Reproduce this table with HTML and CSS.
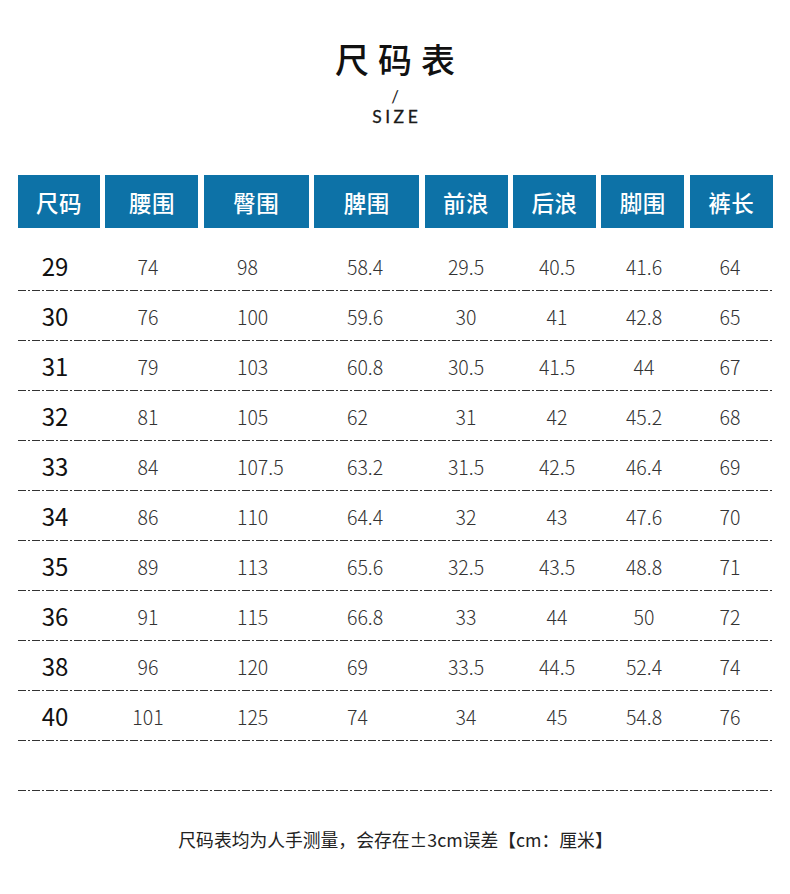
FILE: index.html
```html
<!DOCTYPE html>
<html lang="zh-CN">
<head>
<meta charset="utf-8">
<title>尺码表</title>
<link rel="stylesheet" href="styles.css">
</head>
<body>
<div class="page">
  <header class="heading">
    <h1 class="title">尺码表</h1>
    <div class="slash">/</div>
    <div class="size-label">SIZE</div>
  </header>

  <section class="table">
    <div class="head-row">
      <div class="hcell">尺码</div>
      <div class="hcell">腰围</div>
      <div class="hcell">臀围</div>
      <div class="hcell">脾围</div>
      <div class="hcell">前浪</div>
      <div class="hcell">后浪</div>
      <div class="hcell">脚围</div>
      <div class="hcell">裤长</div>
    </div>

    <div class="body">
      <div class="row"><span class="c size">29</span><span class="c">74</span><span class="c left">98</span><span class="c left">58.4</span><span class="c">29.5</span><span class="c">40.5</span><span class="c">41.6</span><span class="c">64</span></div>
      <div class="row"><span class="c size">30</span><span class="c">76</span><span class="c left">100</span><span class="c left">59.6</span><span class="c">30</span><span class="c">41</span><span class="c">42.8</span><span class="c">65</span></div>
      <div class="row"><span class="c size">31</span><span class="c">79</span><span class="c left">103</span><span class="c left">60.8</span><span class="c">30.5</span><span class="c">41.5</span><span class="c">44</span><span class="c">67</span></div>
      <div class="row"><span class="c size">32</span><span class="c">81</span><span class="c left">105</span><span class="c left">62</span><span class="c">31</span><span class="c">42</span><span class="c">45.2</span><span class="c">68</span></div>
      <div class="row"><span class="c size">33</span><span class="c">84</span><span class="c left">107.5</span><span class="c left">63.2</span><span class="c">31.5</span><span class="c">42.5</span><span class="c">46.4</span><span class="c">69</span></div>
      <div class="row"><span class="c size">34</span><span class="c">86</span><span class="c left">110</span><span class="c left">64.4</span><span class="c">32</span><span class="c">43</span><span class="c">47.6</span><span class="c">70</span></div>
      <div class="row"><span class="c size">35</span><span class="c">89</span><span class="c left">113</span><span class="c left">65.6</span><span class="c">32.5</span><span class="c">43.5</span><span class="c">48.8</span><span class="c">71</span></div>
      <div class="row"><span class="c size">36</span><span class="c">91</span><span class="c left">115</span><span class="c left">66.8</span><span class="c">33</span><span class="c">44</span><span class="c">50</span><span class="c">72</span></div>
      <div class="row"><span class="c size">38</span><span class="c">96</span><span class="c left">120</span><span class="c left">69</span><span class="c">33.5</span><span class="c">44.5</span><span class="c">52.4</span><span class="c">74</span></div>
      <div class="row"><span class="c size">40</span><span class="c">101</span><span class="c left">125</span><span class="c left">74</span><span class="c">34</span><span class="c">45</span><span class="c">54.8</span><span class="c">76</span></div>
      <div class="row empty"></div>
    </div>
  </section>

  <p class="note">尺码表均为人手测量，会存在±3cm误差【cm：厘米】</p>
</div>
</body>
</html>
```

FILE: styles.css
```css
html, body {
  margin: 0;
  padding: 0;
  background: #ffffff;
}

body {
  font-family: "Noto Sans CJK SC", "Noto Sans", sans-serif;
  color: #222;
}

.page {
  width: 790px;
  height: 894px;
  overflow: hidden;
}

.heading {
  padding-top: 42px;
  display: flex;
  flex-direction: column;
  align-items: center;
}

.title {
  margin: 0;
  font-size: 34px;
  line-height: 34px;
  font-weight: 500;
  letter-spacing: 9px;
  padding-left: 9px;
  color: #111;
}

.slash {
  margin-top: 13px;
  font-family: Lato, "Liberation Sans", sans-serif;
  font-weight: 400;
  font-size: 17px;
  line-height: 16px;
  color: #222;
}

.size-label {
  margin-top: 2px;
  font-family: Lato, "Liberation Sans", sans-serif;
  font-size: 17.5px;
  line-height: 19px;
  letter-spacing: 3.5px;
  padding-left: 3.5px;
  font-weight: 400;
  color: #1a1a1a;
  -webkit-text-stroke: 0.3px #1a1a1a;
}

.table {
  margin: 49px 0 0 18px;
  width: 756px;
}

.head-row {
  display: grid;
  grid-template-columns: 82px 93px 105px 105px 83px 83px 83px 83px;
  column-gap: 5.4px;
}

.hcell {
  height: 53px;
  background: #0d72a7;
  color: #ffffff;
  font-size: 22.5px;
  font-weight: 500;
  display: flex;
  align-items: center;
  justify-content: center;
  letter-spacing: 0.5px;
}

.body {
  margin-top: 13px;
}

.row {
  display: grid;
  grid-template-columns: 74px 112px 111px 105px 92px 90px 84px 88px;
  height: 49px;
  align-items: center;
  background-image: repeating-linear-gradient(to right,
    #333 0 8px, transparent 8px 10px, #333 10px 12px, transparent 12px 14px);
  background-size: 100% 1px;
  background-position: left bottom;
  background-repeat: no-repeat;
  padding-bottom: 1px;
}

.c {
  text-align: center;
  font-size: 19.5px;
  font-weight: 300;
  color: #333;
  line-height: 1;
  padding-top: 2px;
}

.c.size {
  font-size: 24px;
  font-weight: 400;
  color: #111;
  padding-top: 0;
}

.c.left {
  text-align: left;
  padding-left: 33px;
}

.c.left + .c.left {
  padding-left: 32px;
}

.note {
  margin: 38px 0 0;
  text-align: center;
  font-size: 17.8px;
  line-height: 20px;
  color: #222;
  padding-left: 1px;
}
```
